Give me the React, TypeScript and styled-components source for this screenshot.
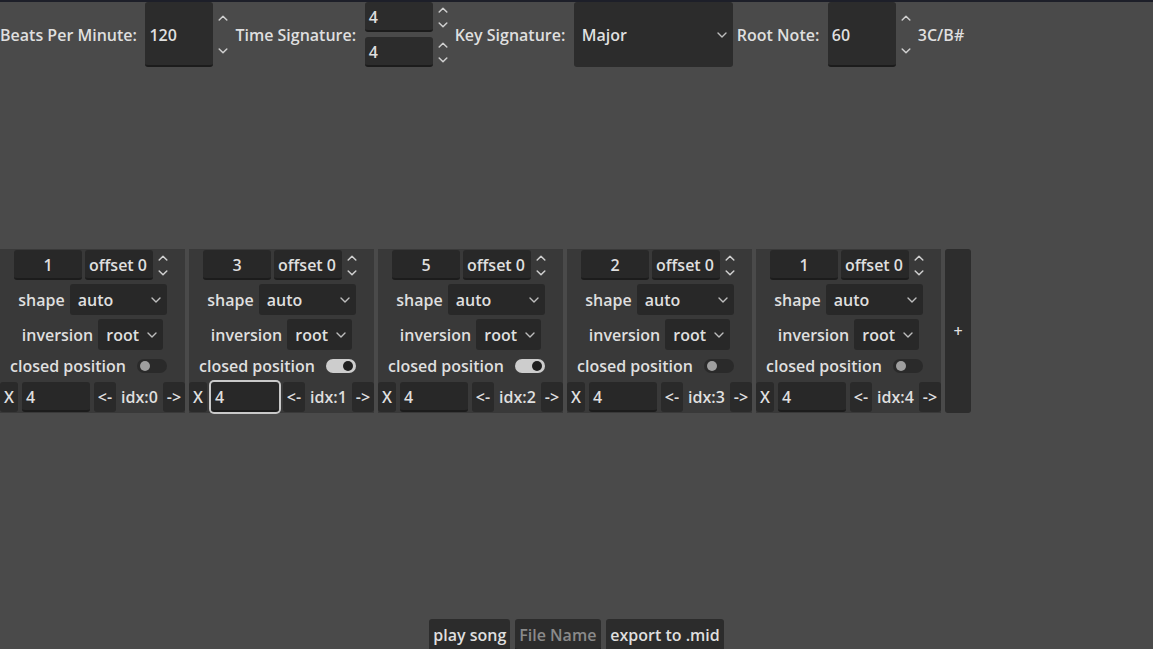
import React from "react";
import styled, { createGlobalStyle } from "styled-components";

const GlobalStyle = createGlobalStyle`
  html, body { margin: 0; padding: 0; background: #4a4a4a; }
  body {
    font-family: "Open Sans", "Noto Sans", sans-serif;
    font-weight: 600;
    font-size: 16px;
    color: #dfdfdf;
  }
  * { box-sizing: border-box; }
`;

type Tone = "page" | "panel";
const fieldBg = (t: Tone) => (t === "page" ? "#2c2c2c" : "#282828");

const Page = styled.div`
  width: 1153px;
  height: 649px;
  overflow: hidden;
  display: flex;
  flex-direction: column;
  background: #4a4a4a;
`;

const TopStrip = styled.div`
  height: 2px;
  flex-shrink: 0;
  background: #1d1f29;
`;

const TopBar = styled.div`
  display: flex;
  align-items: flex-start;
  gap: 4px;
  height: 66px;
  flex-shrink: 0;
`;

const BarLabel = styled.span`
  align-self: center;
  padding-right: 4.5px;
  white-space: nowrap;
  line-height: 20px;
  margin-top: -1px;
`;

const Stack = styled.div`
  display: flex;
  flex-direction: column;
  gap: 5px;
`;

const SpinWrap = styled.div<{ $h: number }>`
  display: flex;
  height: ${(p) => p.$h}px;
  flex-shrink: 0;
`;

const Field = styled.div<{ $w: number; $tone: Tone; $center?: boolean; $focus?: boolean }>`
  width: ${(p) => p.$w}px;
  height: 100%;
  background: ${(p) => fieldBg(p.$tone)};
  border-radius: 3px;
  border-bottom: 2px solid #1c1c1c;
  display: flex;
  align-items: center;
  justify-content: ${(p) => (p.$center ? "center" : "flex-start")};
  padding: 2px 4px 0 4px;
  white-space: nowrap;
  line-height: 20px;
  box-shadow: ${(p) => (p.$focus ? "0 0 0 2px #c9c9c9" : "none")};
`;

const Placeholder = styled.span`
  color: #8a8a8a;
`;

const Arrows = styled.div`
  width: 18px;
  padding-left: 2px;
  display: flex;
  flex-direction: column;
`;

const ArrowHalf = styled.div`
  flex: 1;
  display: flex;
  align-items: center;
  justify-content: center;
`;

const Chev = ({ up }: { up?: boolean }) => (
  <svg width="10" height="6" viewBox="0 0 10 6">
    <path
      d={up ? "M1.2 5 L5 1.2 L8.8 5" : "M1.2 1 L5 4.8 L8.8 1"}
      stroke="#cfcfcf"
      strokeWidth="1.5"
      fill="none"
      strokeLinecap="round"
      strokeLinejoin="round"
    />
  </svg>
);

const SelectBox = styled.div<{ $w: number; $h: number; $tone: Tone }>`
  width: ${(p) => p.$w}px;
  height: ${(p) => p.$h}px;
  background: ${(p) => fieldBg(p.$tone)};
  border-radius: 3px;
  display: flex;
  align-items: center;
  justify-content: space-between;
  padding: 0 6px 0 8px;
  flex-shrink: 0;
  line-height: 20px;
`;

const SelChev = () => (
  <svg width="10" height="6" viewBox="0 0 10 6">
    <path d="M1 1 L5 5 L9 1" stroke="#bdbdbd" strokeWidth="1.4" fill="none" strokeLinecap="round" strokeLinejoin="round" />
  </svg>
);

const SpinBox: React.FC<{
  value: React.ReactNode;
  h: number;
  tone: Tone;
  center?: boolean;
  w?: number;
}> = ({ value, h, tone, center, w = 68 }) => (
  <SpinWrap $h={h}>
    <Field $w={w} $tone={tone} $center={center}>
      {value}
    </Field>
    <Arrows>
      <ArrowHalf>
        <Chev up />
      </ArrowHalf>
      <ArrowHalf>
        <Chev />
      </ArrowHalf>
    </Arrows>
  </SpinWrap>
);

const Select: React.FC<{ value: string; w: number; h: number; tone: Tone }> = ({ value, w, h, tone }) => (
  <SelectBox $w={w} $h={h} $tone={tone}>
    <span>{value}</span>
    <SelChev />
  </SelectBox>
);

const PanelsRow = styled.div`
  display: flex;
  gap: 4px;
  margin-top: 181px;
  flex-shrink: 0;
`;

const ChordPanel = styled.div`
  width: 185px;
  height: 164px;
  background: #393939;
  display: flex;
  flex-direction: column;
  align-items: center;
  gap: 4px;
  padding-top: 1px;
`;

const Row = styled.div<{ $h: number; $gap: number; $full?: boolean }>`
  display: flex;
  align-items: center;
  height: ${(p) => p.$h}px;
  gap: ${(p) => p.$gap}px;
  align-self: ${(p) => (p.$full ? "stretch" : "center")};
  white-space: nowrap;
  line-height: 20px;
`;

const SmallButton = styled.div<{ $w: number }>`
  width: ${(p) => p.$w}px;
  height: 100%;
  background: #2a2a2a;
  border-radius: 3px;
  display: flex;
  align-items: center;
  justify-content: center;
  flex-shrink: 0;
`;

const IdxLabel = styled.span`
  flex: 1;
  text-align: center;
`;

const CheckWrap = styled.div`
  display: flex;
  align-items: center;
  gap: 11px;
  padding-right: 8px;
`;

const Switch = styled.div<{ $on: boolean }>`
  width: 30px;
  height: 14px;
  border-radius: 7px;
  background: ${(p) => (p.$on ? "#cdcdcd" : "#2a2a2a")};
  display: flex;
  align-items: center;
  justify-content: ${(p) => (p.$on ? "flex-end" : "flex-start")};
  padding: 0 3px;
`;

const Knob = styled.div<{ $on: boolean }>`
  width: 10px;
  height: 10px;
  border-radius: 50%;
  background: ${(p) => (p.$on ? "#1f1f1f" : "#9f9f9f")};
`;

const PlusButton = styled.div`
  width: 26px;
  height: 164px;
  background: #2d2d2d;
  border-radius: 3px;
  display: flex;
  align-items: center;
  justify-content: center;
`;

const BottomBar = styled.div`
  margin-top: auto;
  height: 30px;
  display: flex;
  justify-content: center;
  align-items: flex-start;
  gap: 5px;
  flex-shrink: 0;
`;

const BarButton = styled.div`
  height: 32px;
  background: #2c2c2c;
  border-radius: 3px;
  padding: 0 4px;
  display: flex;
  align-items: center;
  padding-bottom: 1px;
  white-space: nowrap;
`;

const chords = [
  { num: 1, on: false, focus: false, idx: 0 },
  { num: 3, on: true, focus: true, idx: 1 },
  { num: 5, on: true, focus: false, idx: 2 },
  { num: 2, on: false, focus: false, idx: 3 },
  { num: 1, on: false, focus: false, idx: 4 },
];

export default function App() {
  return (
    <>
      <GlobalStyle />
      <Page>
        <TopStrip />
        <TopBar>
          <BarLabel>Beats Per Minute:</BarLabel>
          <SpinBox value="120" h={65} tone="page" />
          <BarLabel>Time Signature:</BarLabel>
          <Stack>
            <SpinBox value="4" h={30} tone="page" />
            <SpinBox value="4" h={30} tone="page" />
          </Stack>
          <BarLabel>Key Signature:</BarLabel>
          <Select value="Major" w={159} h={65} tone="page" />
          <BarLabel>Root Note:</BarLabel>
          <SpinBox value="60" h={65} tone="page" />
          <BarLabel>3C/B#</BarLabel>
        </TopBar>

        <PanelsRow>
          {chords.map((c, i) => (
            <ChordPanel key={i}>
              <Row $h={30} $gap={3}>
                <SpinWrap $h={30}>
                  <Field $w={68} $tone="panel" $center>
                    {c.num}
                  </Field>
                </SpinWrap>
                <SpinBox value="offset 0" h={30} tone="panel" />
              </Row>
              <Row $h={31} $gap={5}>
                <span>shape</span>
                <Select value="auto" w={97} h={31} tone="panel" />
              </Row>
              <Row $h={31} $gap={5}>
                <span>inversion</span>
                <Select value="root" w={65} h={31} tone="panel" />
              </Row>
              <Row $h={24} $gap={0}>
                <CheckWrap>
                  <span>closed position</span>
                  <Switch $on={c.on}>
                    <Knob $on={c.on} />
                  </Switch>
                </CheckWrap>
              </Row>
              <Row $h={30} $gap={4} $full>
                <SmallButton $w={18}>X</SmallButton>
                <Field $w={68} $tone="panel" $focus={c.focus}>
                  4
                </Field>
                <SmallButton $w={22}>&lt;-</SmallButton>
                <IdxLabel>idx:{c.idx}</IdxLabel>
                <SmallButton $w={22}>-&gt;</SmallButton>
              </Row>
            </ChordPanel>
          ))}
          <PlusButton>+</PlusButton>
        </PanelsRow>

        <BottomBar>
          <BarButton>play song</BarButton>
          <SpinWrap $h={32}>
            <Field $w={86} $tone="page">
              <Placeholder>File Name</Placeholder>
            </Field>
          </SpinWrap>
          <BarButton>export to .mid</BarButton>
        </BottomBar>
      </Page>
    </>
  );
}
